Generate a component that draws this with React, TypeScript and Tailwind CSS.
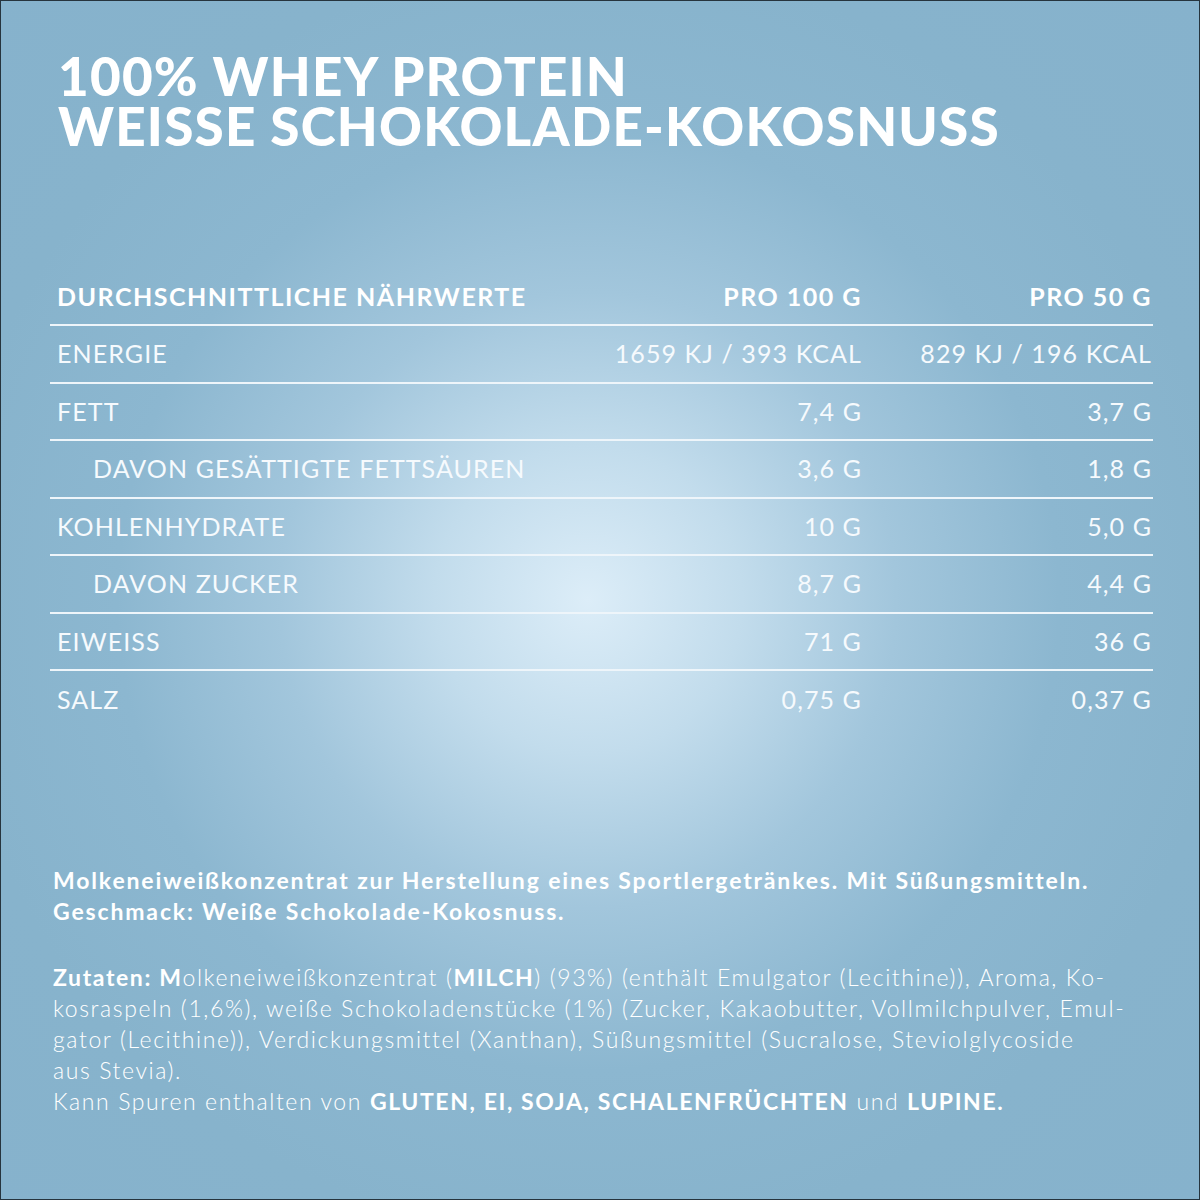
import React from "react";

type Row = { label: string; per100: string; per50: string; sub?: boolean };

const rows: Row[] = [
  { label: "ENERGIE", per100: "1659 KJ / 393 KCAL", per50: "829 KJ / 196 KCAL" },
  { label: "FETT", per100: "7,4 G", per50: "3,7 G" },
  { label: "DAVON GESÄTTIGTE FETTSÄUREN", per100: "3,6 G", per50: "1,8 G", sub: true },
  { label: "KOHLENHYDRATE", per100: "10 G", per50: "5,0 G" },
  { label: "DAVON ZUCKER", per100: "8,7 G", per50: "4,4 G", sub: true },
  { label: "EIWEISS", per100: "71 G", per50: "36 G" },
  { label: "SALZ", per100: "0,75 G", per50: "0,37 G" },
];

export default function App() {
  return (
    <div
      className="w-[1200px] h-[1200px] border border-[#26343d] bg-[radial-gradient(circle_at_49%_50%,#dcedf8_0%,#c2dcec_18%,#a2c6dc_36%,#8cb7d0_55%,#87b3cc_75%,#86b2cc_100%)] text-white overflow-hidden"
      style={{ fontFamily: "Lato, 'Open Sans', sans-serif" }}
    >
      <div className="pt-[50px] pl-[57px]">
        <h1 className="text-[53px] leading-[50px] font-black tracking-[1.2px]">
          100% WHEY PROTEIN
          <br />
          WEISSE SCHOKOLADE-KOKOSNUSS
        </h1>
      </div>

      <div className="mt-[118px] mx-[49px] w-[1103px]">
        <div className="flex items-center h-[57px] border-b-2 border-[#eef5fa] text-[25px] font-bold tracking-[1.5px]">
          <div className="pl-[7px] flex-1">DURCHSCHNITTLICHE NÄHRWERTE</div>
          <div className="w-[300px] text-right mr-[1px]">PRO 100 G</div>
          <div className="w-[290px] text-right pr-[1px]">PRO 50 G</div>
        </div>
        {rows.map((r, i) => (
          <div
            key={r.label}
            className={
              "flex items-center h-[57.5px] text-[25px] font-normal tracking-[1.1px] text-[#f6fafd] " +
              (i < rows.length - 1 ? "border-b-2 border-[#eef5fa]" : "")
            }
          >
            <div className={r.sub ? "pl-[43px] flex-1" : "pl-[7px] flex-1"}>{r.label}</div>
            <div className="w-[300px] text-right mr-[1px]">{r.per100}</div>
            <div className="w-[290px] text-right pr-[1px]">{r.per50}</div>
          </div>
        ))}
      </div>

      <div className="mt-[136px] pl-[52px] text-[23px] leading-[31px]">
        <p className="font-bold tracking-[1.85px]">
          Molkeneiweißkonzentrat zur Herstellung eines Sportlergetränkes. Mit Süßungsmitteln.
          <br />
          Geschmack: Weiße Schokolade-Kokosnuss.
        </p>
        <p className="mt-[35px] font-light tracking-[1.6px] whitespace-nowrap">
          <b className="font-bold">Zutaten: M</b>olkeneiweißkonzentrat (<b className="font-bold">MILCH</b>) (93%) (enthält Emulgator (Lecithine)), Aroma, Ko-
          <br />
          kosraspeln (1,6%), weiße Schokoladenstücke (1%) (Zucker, Kakaobutter, Vollmilchpulver, Emul-
          <br />
          gator (Lecithine)), Verdickungsmittel (Xanthan), Süßungsmittel (Sucralose, Steviolglycoside
          <br />
          aus Stevia).
          <br />
          Kann Spuren enthalten von <b className="font-bold">GLUTEN, EI, SOJA, SCHALENFRÜCHTEN</b> und <b className="font-bold">LUPINE.</b>
        </p>
      </div>
    </div>
  );
}
